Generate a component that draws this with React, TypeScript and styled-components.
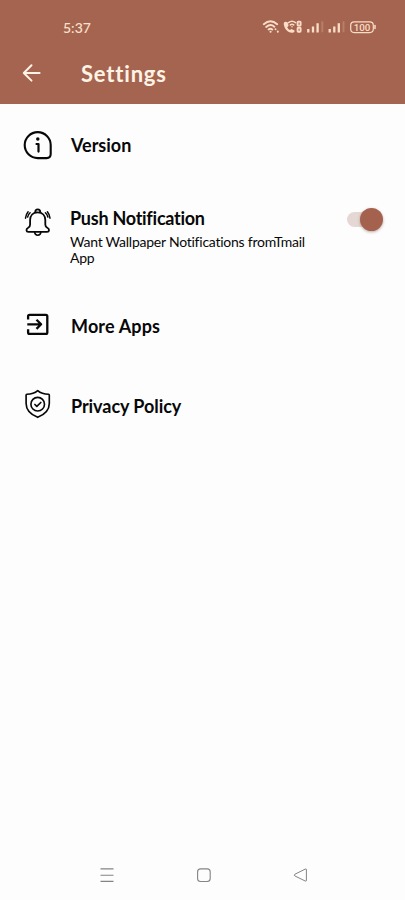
import React from "react";
import styled, { createGlobalStyle } from "styled-components";

const GlobalStyle = createGlobalStyle`
  * { box-sizing: border-box; }
  body { margin: 0; background: #fefdfe; }
  svg { display: block; flex: none; }
`;

const Screen = styled.main`
  width: 405px;
  height: 900px;
  display: flex;
  flex-direction: column;
  background: #fefdfe;
  color: #080808;
  font-family: Lato, "Open Sans", sans-serif;
  font-variant-ligatures: none;
  overflow: hidden;
`;

const Header = styled.header`
  height: 104px;
  flex: none;
  background: #a4644f;
  color: #fff3e6;
`;

const StatusBar = styled.div`
  height: 54px;
  padding: 0 29px 0 63px;
  display: flex;
  align-items: center;
  justify-content: space-between;
`;

const Clock = styled.time`
  font-size: 14px;
  font-weight: 500;
  letter-spacing: 0;
  color: #fbe0cc;
`;

const AppBar = styled.div`
  height: 38px;
  padding-left: 22px;
  display: flex;
  align-items: center;
  gap: 39px;
`;

const BackButton = styled.button`
  width: 20px;
  height: 20px;
  padding: 0;
  border: 0;
  background: none;
  color: inherit;
`;

const Title = styled.h1<{ $tracking: number }>`
  margin: 2px 0 0;
  font-size: 22px;
  line-height: 28px;
  font-weight: 700;
  letter-spacing: ${(p) => p.$tracking}px;
`;

const List = styled.section`
  flex: 1;
  display: flex;
  flex-direction: column;
`;

const Row = styled.div<{ $height: number; $top: number; $gap: number }>`
  height: ${(p) => p.$height}px;
  padding: ${(p) => p.$top}px 22px 0 22px;
  display: flex;
  align-items: flex-start;
  gap: ${(p) => p.$gap}px;
`;

const Copy = styled.div<{ $offset: number }>`
  flex: 1;
  padding-top: ${(p) => p.$offset}px;
`;

const Label = styled.h2<{ $tracking: number }>`
  margin: 0;
  font-size: 18px;
  line-height: 22px;
  font-weight: 700;
  letter-spacing: ${(p) => p.$tracking}px;
  white-space: nowrap;
`;

const Detail = styled.p`
  margin: 5px 0 0;
  width: 250px;
  font-size: 14px;
  line-height: 16px;
  letter-spacing: -0.24px;
`;

const Switch = styled.button`
  width: 36px;
  height: 23px;
  margin: 2px 0 0;
  padding: 0;
  border: 0;
  display: flex;
  align-items: center;
  background: none;
`;

const Track = styled.span`
  width: 32px;
  height: 15px;
  flex: none;
  border-radius: 8px;
  background: #e5d8d4;
`;

const Thumb = styled.span`
  width: 23px;
  height: 23px;
  margin-left: -19px;
  flex: none;
  border-radius: 50%;
  background: #a4614d;
  box-shadow: 0 1px 3px #6d493b77;
`;

const NavBar = styled.nav`
  height: 50px;
  flex: none;
  padding: 0 97px 0 99px;
  display: flex;
  align-items: center;
  justify-content: space-between;
`;

const StatusIcons = () => (
  <svg width="114" height="16" viewBox="0 0 114 16" fill="none" stroke="#fbdcc6" strokeLinecap="round">
    <g strokeWidth="1.9">
      <path d="M1.8 5.2Q8.5-.6 15.2 5.2M4.2 8Q8.5 4.3 12.3 7.7M6.6 10.5Q8.5 9 10.2 10.5" />
      <path d="M8.5 12.7h.1" strokeWidth="2" />
      <path d="M13.5 10.2v.1M15.8 12.6v.1" strokeWidth="2" />
    </g>
    <path d="M23.6 2.7c-1.7.3-2.1 1.4-1.7 3.2.9 4.2 3.8 7.1 7.8 7.8 1.9.3 2.9-.5 2.9-2.2l-3.1-1.6-1.6 1.2c-1.2-.7-2.1-1.6-2.7-2.9l1.4-1.5-1-3.4z" fill="#fbdcc6" stroke="none" />
    <path d="M26.5 3.6q3.5-2.8 7 0M28.3 5.9q1.7-1.4 3.4 0M30 7.7v.1" strokeWidth="1.5" />
    <rect x="35.6" y="2.6" width="3" height="4" rx=".6" strokeWidth="1.9" />
    <rect x="35.6" y="8.7" width="3" height="4" rx=".6" strokeWidth="1.9" />
    <path d="M46.3 10v3.4M51 7.5v5.9M55.6 4.3v9.1M67.7 10v3.4M72.3 7.5v5.9M76.8 4.3v9.1" strokeWidth="2.3" strokeLinecap="butt" />
    <path d="M60.3 2.3v11M81.5 2.3v11" strokeWidth="2" strokeLinecap="butt" opacity=".22" />
    <rect x="88.7" y="2.8" width="22.6" height="10.8" rx="3.5" strokeWidth="1.2" />
    <path d="M113 6.5v3" strokeWidth="1.5" />
    <text x="100" y="11.7" textAnchor="middle" fill="#fbdcc6" stroke="none" fontFamily="Roboto, sans-serif" fontSize="9.8" fontWeight="500">100</text>
  </svg>
);

const BackIcon = () => (
  <svg width="20" height="20" viewBox="0 0 20 20" fill="none" stroke="currentColor" strokeWidth="2" strokeLinecap="round" strokeLinejoin="round">
    <path d="M17.6 10H2M9.5 2.3L1.8 10l7.7 7.6" />
  </svg>
);

const InfoIcon = () => (
  <svg width="32" height="32" viewBox="0 0 32 32" fill="none" stroke="#080808" strokeLinecap="round" strokeLinejoin="round">
    <path d="M15.7 3.1a13 13 0 1 0 0 26h9c2.6 0 4-1.5 4-4v-9a13 13 0 0 0-13-13z" strokeWidth="2.1" />
    <path d="M14.5 15h2v7.6" strokeWidth="2.2" />
    <circle cx="15.8" cy="10.1" r="1.75" fill="#080808" stroke="none" />
  </svg>
);

const BellIcon = () => (
  <svg width="32" height="32" viewBox="0 0 32 32" fill="none" stroke="#080808" strokeWidth="1.8" strokeLinecap="round" strokeLinejoin="round">
    <path d="M13.2 6.3C13.3 2.5 18.2 2.5 18.3 6.3M15.7 6.3c-4.8 0-7.6 3.3-7.6 7.8v4.3c0 1.9-.5 2.7-1.9 3.4-2.6 1.3-2.1 4 .2 4h18.7c2.3 0 2.8-2.7.2-4-1.4-.7-2-1.5-2-3.4v-4.3c0-4.5-2.8-7.8-7.6-7.8z" />
    <path d="M12.6 26.2c.5 4.2 5.8 4.2 6.3 0M8.1 6.8Q6.1 8.5 5.6 11.1M23.4 6.8q2 1.7 2.5 4.3M6.1 5.7Q4 8.2 3.5 12.2M25.4 5.7q2.1 2.5 2.6 6.5" strokeWidth="1.5" />
  </svg>
);

const ExitIcon = () => (
  <svg width="32" height="32" viewBox="0 0 32 32" fill="none" stroke="#080808" strokeWidth="2.3" strokeLinejoin="round">
    <path d="M6.1 11.5V8.2c0-.9.5-1.4 1.4-1.4h16.4c.9 0 1.4.5 1.4 1.4v16.2c0 .9-.5 1.4-1.4 1.4H7.5c-.9 0-1.4-.5-1.4-1.4v-3.2M5.3 16.3h13.6M14.5 11.7l4.6 4.6-4.6 4.6" />
  </svg>
);

const ShieldIcon = () => (
  <svg width="32" height="32" viewBox="0 0 32 32" fill="none" stroke="#080808" strokeWidth="1.65" strokeLinecap="round" strokeLinejoin="round">
    <path d="M15.7 2.6C12.8 5.1 9.1 6.2 4.9 6.3q-.8.1-.8.9v8.2c0 6.3 4.4 10.9 11.6 13.9 7.2-3 11.6-7.6 11.6-13.9V7.2q0-.8-.8-.9c-4.2-.1-7.9-1.2-10.8-3.7z" />
    <circle cx="15.7" cy="16.2" r="6.8" />
    <path d="M12.9 16.5l1.9 1.9 4-3.9" />
  </svg>
);

const MenuIcon = () => (
  <svg width="16" height="16" viewBox="0 0 16 16" stroke="#858385" fill="none">
    <path d="M1.5 1.9h13M1.5 8.2h13M1.5 14.4h13" strokeWidth="1.1" />
  </svg>
);

const HomeIcon = () => (
  <svg width="16" height="16" viewBox="0 0 16 16" stroke="#858385" fill="none">
    <rect x="1.6" y="1.9" width="12.6" height="12.6" rx="3" strokeWidth="1.1" />
  </svg>
);

const NavBackIcon = () => (
  <svg width="16" height="16" viewBox="0 0 16 16" stroke="#858385" fill="none">
    <path d="M13.4 2L3 7.2q-1.8.9 0 1.8l10.4 5.1q1 .4 1-1V3q0-1.5-1-1z" />
  </svg>
);

export default function App() {
  return (
    <Screen>
      <GlobalStyle />
      <Header>
        <StatusBar><Clock>5:37</Clock><StatusIcons /></StatusBar>
        <AppBar>
          <BackButton aria-label="Back"><BackIcon /></BackButton>
          <Title $tracking={0.8}>Settings</Title>
        </AppBar>
      </Header>
      <List>
        <Row $height={80} $top={25} $gap={17}>
          <InfoIcon />
          <Copy $offset={5}><Label $tracking={0}>Version</Label></Copy>
        </Row>
        <Row $height={100} $top={22} $gap={16}>
          <BellIcon />
          <Copy $offset={1}>
            <Label $tracking={-0.26}>Push Notification</Label>
            <Detail>Want Wallpaper Notifications fromTmail App</Detail>
          </Copy>
          <Switch role="switch" aria-checked="true" aria-label="Push Notification"><Track /><Thumb /></Switch>
        </Row>
        <Row $height={80} $top={24} $gap={17}>
          <ExitIcon />
          <Copy $offset={7}><Label $tracking={0.15}>More Apps</Label></Copy>
        </Row>
        <Row $height={80} $top={24} $gap={17}>
          <ShieldIcon />
          <Copy $offset={7}><Label $tracking={-0.06}>Privacy Policy</Label></Copy>
        </Row>
      </List>
      <NavBar><MenuIcon /><HomeIcon /><NavBackIcon /></NavBar>
    </Screen>
  );
}
